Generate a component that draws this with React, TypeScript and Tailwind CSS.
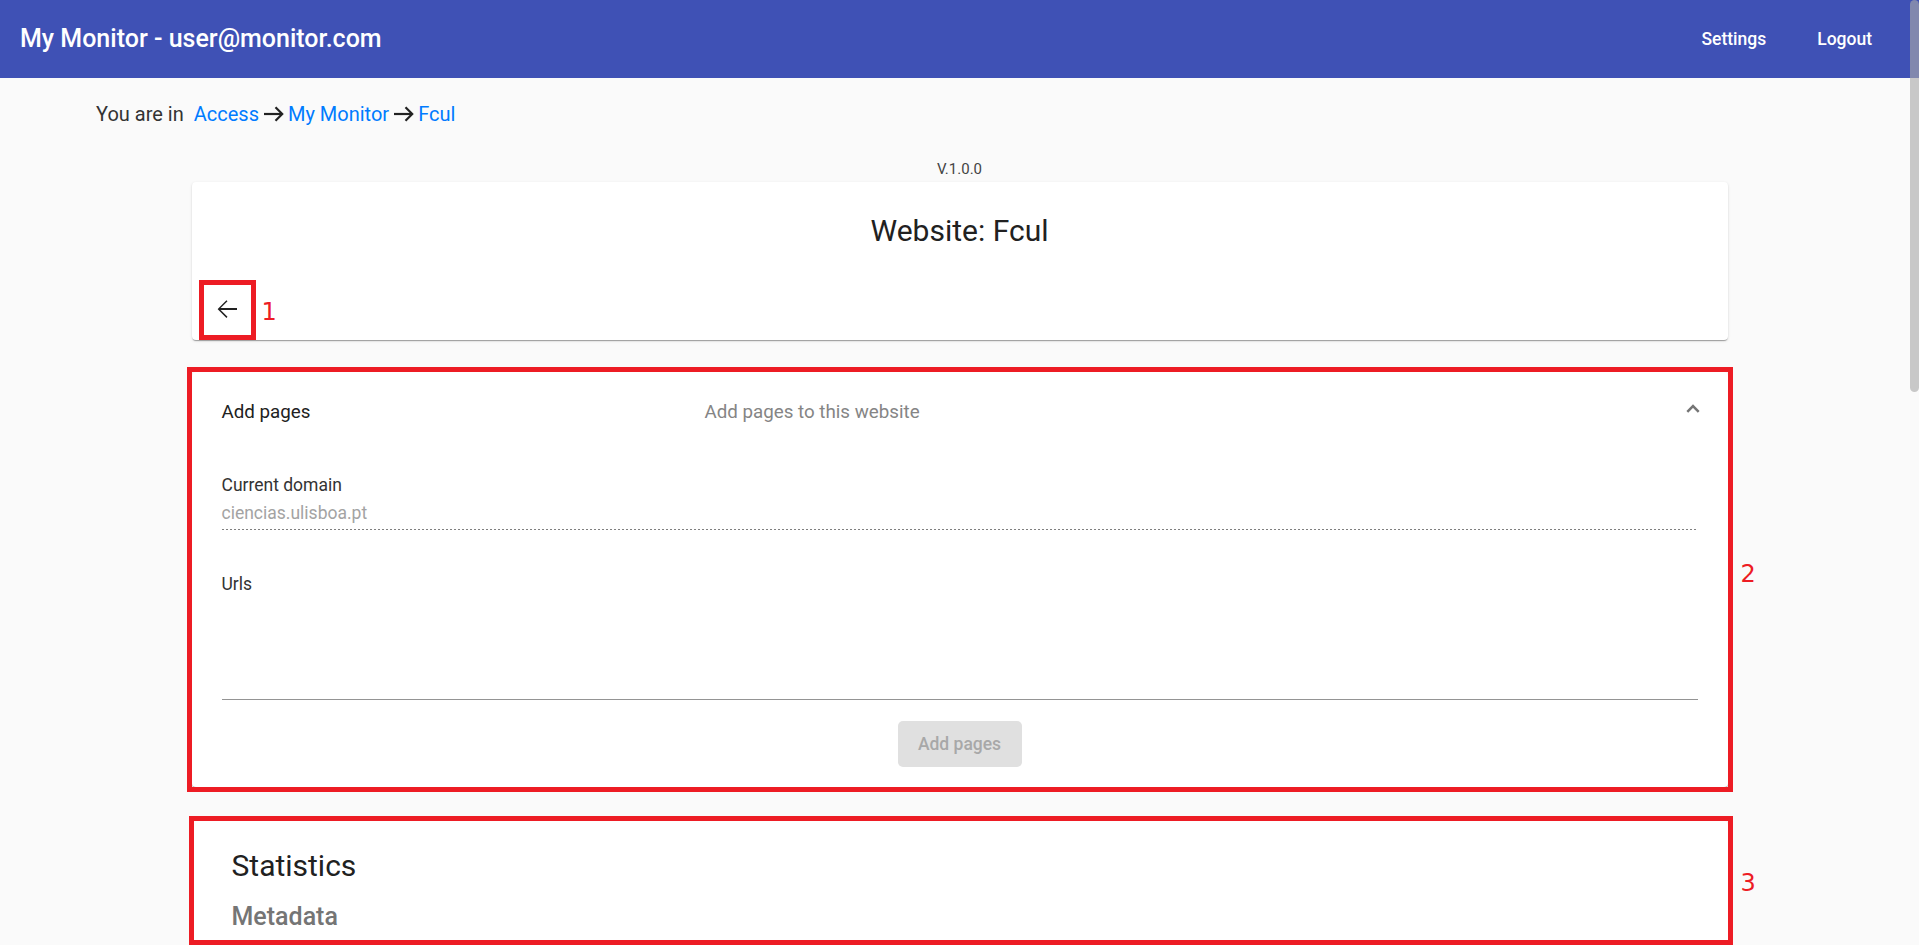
import React from 'react';

function ArrowRight() {
  return (
    <svg width="21" height="16" viewBox="0 0 21 16" fill="none" className="ml-[4px] mr-[4px] shrink-0">
      <path d="M1 8H19" stroke="#222" strokeWidth="2.2" />
      <path d="M12.5 1.3L19.2 8L12.5 14.7" stroke="#222" strokeWidth="2.2" />
    </svg>
  );
}

function RedLabel({ children, className }: { children: React.ReactNode; className: string }) {
  return (
    <span className={`absolute text-[24px] leading-[24px] text-[#ed1c24] font-['DejaVu_Sans',sans-serif] ${className}`}>
      {children}
    </span>
  );
}

const cardShadow =
  'shadow-[0_2px_1px_-1px_rgba(0,0,0,0.2),0_1px_1px_0_rgba(0,0,0,0.14),0_1px_3px_0_rgba(0,0,0,0.12)]';

export default function App() {
  return (
    <div className="h-[945px] overflow-hidden bg-[#fafafa] font-['Roboto',sans-serif] text-[#212121]">
      <header className="h-[78px] bg-[#3f51b5] flex items-center pl-[20px] pr-[27px] text-white">
        <span className="text-[25px] font-medium">My Monitor - user@monitor.com</span>
        <div className="ml-auto flex items-center gap-[11px]">
          <button className="h-[45px] px-[20px] text-[17.5px] font-medium">Settings</button>
          <button className="h-[45px] px-[20px] text-[17.5px] font-medium">Logout</button>
        </div>
      </header>

      <nav className="pl-[96px] pt-[24px] flex items-center h-[48px] text-[20px] leading-[24px]">
        <span className="text-[#333]">You are in</span>
        <a href="#" className="ml-[10px] text-[#007bff]">Access</a>
        <ArrowRight />
        <a href="#" className="text-[#007bff]">My Monitor</a>
        <ArrowRight />
        <a href="#" className="text-[#007bff]">Fcul</a>
      </nav>

      <p className="mt-[34px] text-center text-[15px] leading-[18px] text-[#444]">V.1.0.0</p>

      <div className={`relative mt-[4px] mx-auto w-[1536px] bg-white rounded-[4px] ${cardShadow} pb-[6px]`}>
        <h2 className="pt-[31px] text-center text-[30px] leading-[36px] font-normal">Website: Fcul</h2>
        <button className="mt-[35px] ml-[10px] w-[50px] h-[50px] flex items-center justify-center">
          <svg width="30" height="30" viewBox="0 0 24 24" fill="#212121">
            <path d="M20 11.25H6.9l5.5-5.5-.85-.85L4.6 11.9v.2l6.95 7 .85-.85-5.5-5.5H20z" />
          </svg>
        </button>
        <div className="absolute left-[7px] top-[98px] w-[57px] h-[60px] border-[5px] border-[#ed1c24]" />
        <RedLabel className="left-[70px] top-[118px]">1</RedLabel>
      </div>

      <section className={`relative mt-[32px] mx-auto w-[1536px] bg-white rounded-[4px] ${cardShadow}`}>
        <div className="h-[80px] flex items-center pl-[30px] pr-[28px] text-[18.75px]">
          <span className="w-[463px] mr-[20px] shrink-0">Add pages</span>
          <span className="flex-1 text-[#858585]">Add pages to this website</span>
          <svg width="14" height="9" viewBox="0 0 14 9" fill="none" className="-mt-[7px]">
            <path d="M1.3 7.8L7 2.1L12.7 7.8" stroke="#757575" strokeWidth="2.5" />
          </svg>
        </div>
        <div className="px-[30px] pb-[20px] text-[17.5px] leading-[22px]">
          <div className="pt-[22px] text-[#333]">Current domain</div>
          <div className="mt-[6px] text-[#a3a3a3]">ciencias.ulisboa.pt</div>
          <div className="mt-[5px] h-px bg-[linear-gradient(to_right,rgba(0,0,0,0.5)_0%,rgba(0,0,0,0.5)_40%,transparent_0%)] bg-[length:4px_1px] bg-repeat-x" />
          <div className="mt-[43px] text-[#333]">Urls</div>
          <div className="mt-[104px] h-px bg-[#949494]" />
          <button
            disabled
            className="mt-[21px] mx-auto flex items-center justify-center w-[124px] h-[46px] rounded-[5px] bg-[#e0e0e0] text-[#a8a8a8] text-[17.5px] font-medium"
          >
            Add pages
          </button>
        </div>
        <div className="absolute -inset-[5px] border-[5px] border-[#ed1c24]" />
        <RedLabel className="left-[calc(100%+13px)] top-[190px]">2</RedLabel>
      </section>

      <section className={`relative mt-[34px] mx-auto w-[1536px] bg-white rounded-[4px] ${cardShadow} pl-[40px] pt-[27px] pb-[80px]`}>
        <h3 className="text-[30px] leading-[36px] font-normal">Statistics</h3>
        <h4 className="mt-[18px] text-[25px] leading-[30px] font-medium text-[#757575]">Metadata</h4>
        <div className="absolute top-[-5px] left-[-3px] right-[-5px] h-[129px] border-[5px] border-[#ed1c24]" />
        <RedLabel className="left-[calc(100%+13px)] top-[50px]">3</RedLabel>
      </section>

      <div className="fixed right-0 top-0 w-[9px] h-[392px] rounded-full bg-[rgba(169,169,169,0.62)]" />
    </div>
  );
}
